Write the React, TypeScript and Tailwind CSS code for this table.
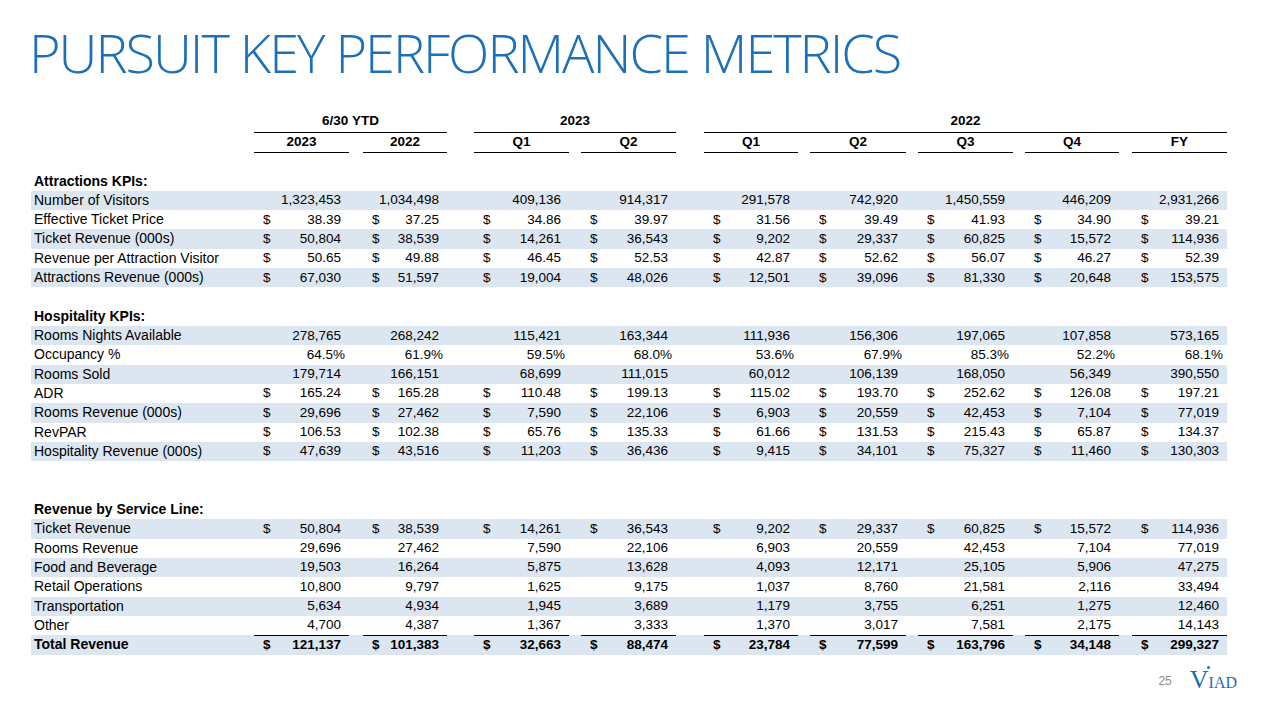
import React from "react";

type Row = {
  label: string;
  values?: string[];
  dollar?: boolean;
  bold?: boolean;
  shaded?: boolean;
  total?: boolean;
  heading?: boolean;
  pct?: boolean;
};

const COLS = [
  "w-[95px]",
  "ml-[14px] w-[84px]",
  "ml-[27px] w-[95px]",
  "ml-[12px] w-[95px]",
  "ml-[28px] w-[94px]",
  "ml-[12px] w-[96px]",
  "ml-[12px] w-[95px]",
  "ml-[12px] w-[94px]",
  "ml-[13px] w-[95px]",
];

const SUBHEADS = ["2023", "2022", "Q1", "Q2", "Q1", "Q2", "Q3", "Q4", "FY"];

const split = (s: string) => s.trim().split(/\s+/);

const ROWS: Row[] = [
  { label: "Attractions KPIs:", heading: true },
  { label: "Number of Visitors", shaded: true, values: split("1,323,453 1,034,498 409,136 914,317 291,578 742,920 1,450,559 446,209 2,931,266") },
  { label: "Effective Ticket Price", dollar: true, values: split("38.39 37.25 34.86 39.97 31.56 39.49 41.93 34.90 39.21") },
  { label: "Ticket Revenue (000s)", dollar: true, shaded: true, values: split("50,804 38,539 14,261 36,543 9,202 29,337 60,825 15,572 114,936") },
  { label: "Revenue per Attraction Visitor", dollar: true, values: split("50.65 49.88 46.45 52.53 42.87 52.62 56.07 46.27 52.39") },
  { label: "Attractions Revenue (000s)", dollar: true, shaded: true, values: split("67,030 51,597 19,004 48,026 12,501 39,096 81,330 20,648 153,575") },
  { label: "" },
  { label: "Hospitality KPIs:", heading: true },
  { label: "Rooms Nights Available", shaded: true, values: split("278,765 268,242 115,421 163,344 111,936 156,306 197,065 107,858 573,165") },
  { label: "Occupancy %", pct: true, values: split("64.5% 61.9% 59.5% 68.0% 53.6% 67.9% 85.3% 52.2% 68.1%") },
  { label: "Rooms Sold", shaded: true, values: split("179,714 166,151 68,699 111,015 60,012 106,139 168,050 56,349 390,550") },
  { label: "ADR", dollar: true, values: split("165.24 165.28 110.48 199.13 115.02 193.70 252.62 126.08 197.21") },
  { label: "Rooms Revenue (000s)", dollar: true, shaded: true, values: split("29,696 27,462 7,590 22,106 6,903 20,559 42,453 7,104 77,019") },
  { label: "RevPAR", dollar: true, values: split("106.53 102.38 65.76 135.33 61.66 131.53 215.43 65.87 134.37") },
  { label: "Hospitality Revenue (000s)", dollar: true, shaded: true, values: split("47,639 43,516 11,203 36,436 9,415 34,101 75,327 11,460 130,303") },
  { label: "" },
  { label: "" },
  { label: "Revenue by Service Line:", heading: true },
  { label: "Ticket Revenue", dollar: true, shaded: true, values: split("50,804 38,539 14,261 36,543 9,202 29,337 60,825 15,572 114,936") },
  { label: "Rooms Revenue", values: split("29,696 27,462 7,590 22,106 6,903 20,559 42,453 7,104 77,019") },
  { label: "Food and Beverage", shaded: true, values: split("19,503 16,264 5,875 13,628 4,093 12,171 25,105 5,906 47,275") },
  { label: "Retail Operations", values: split("10,800 9,797 1,625 9,175 1,037 8,760 21,581 2,116 33,494") },
  { label: "Transportation", shaded: true, values: split("5,634 4,934 1,945 3,689 1,179 3,755 6,251 1,275 12,460") },
  { label: "Other", values: split("4,700 4,387 1,367 3,333 1,370 3,017 7,581 2,175 14,143") },
  { label: "Total Revenue", dollar: true, bold: true, shaded: true, total: true, values: split("121,137 101,383 32,663 88,474 23,784 77,599 163,796 34,148 299,327") },
];

const TableRow: React.FC<{ row: Row }> = ({ row }) => (
  <div className={`flex h-[19.33px] items-center ${row.shaded ? "bg-[#dce6f1]" : ""} ${row.bold || row.heading ? "font-bold" : ""}`}>
    <div className="w-[223px] pl-[3px] text-[14px] whitespace-nowrap">{row.label}</div>
    {row.values &&
      row.values.map((v, i) => (
        <div
          key={i}
          className={`${COLS[i]} flex h-full items-center justify-between pl-[9px] ${row.pct ? "pr-[4px]" : "pr-[8px]"} ${row.total ? "border-t border-black" : ""}`}
        >
          <span>{row.dollar ? "$" : ""}</span>
          <span>{v}</span>
        </div>
      ))}
  </div>
);

const Logo: React.FC = () => (
  <div className="relative flex items-baseline text-[#1f6db0]" style={{ fontFamily: '"Liberation Serif", serif' }}>
    <span className="text-[26px] leading-none">V</span>
    <span className="text-[16px] leading-none">IAD</span>
    <span className="absolute left-[17px] top-[-1px] h-[3px] w-[3px] rounded-full bg-[#1f6db0]" />
  </div>
);

export default function App() {
  return (
    <div
      className="relative h-[720px] w-[1280px] overflow-hidden bg-white text-black"
      style={{ fontFamily: '"Liberation Sans", Arial, sans-serif' }}
    >
      <h1
        className="pl-[29px] pt-[25px] text-[54px] font-light leading-none tracking-[-2px] text-[#1d70b7]"
        style={{ fontFamily: '"Open Sans", "Noto Sans", sans-serif' }}
      >
        PURSUIT KEY PERFORMANCE METRICS
      </h1>

      <div className="ml-[31px] mt-[32px] w-[1196px] text-[13.5px]">
        <div className="flex h-[22px] items-center font-bold">
          <div className="w-[223px]" />
          <div className="flex h-full w-[193px] items-center justify-center border-b border-black">6/30 YTD</div>
          <div className="ml-[27px] flex h-full w-[202px] items-center justify-center border-b border-black">2023</div>
          <div className="ml-[28px] flex h-full w-[523px] items-center justify-center border-b border-black">2022</div>
        </div>
        <div className="flex h-[20px] items-center font-bold">
          <div className="w-[223px]" />
          {SUBHEADS.map((h, i) => (
            <div key={i} className={`${COLS[i]} flex h-full items-center justify-center border-b border-black`}>
              {h}
            </div>
          ))}
        </div>
        <div className="h-[18.33px]" />
        {ROWS.map((r, i) => (
          <TableRow key={i} row={r} />
        ))}
      </div>

      <div className="mt-[12px] flex items-end justify-end gap-[18px] pr-[43px]">
        <span className="mb-[3px] text-[12px] text-[#8c8c8c]">25</span>
        <Logo />
      </div>
    </div>
  );
}
